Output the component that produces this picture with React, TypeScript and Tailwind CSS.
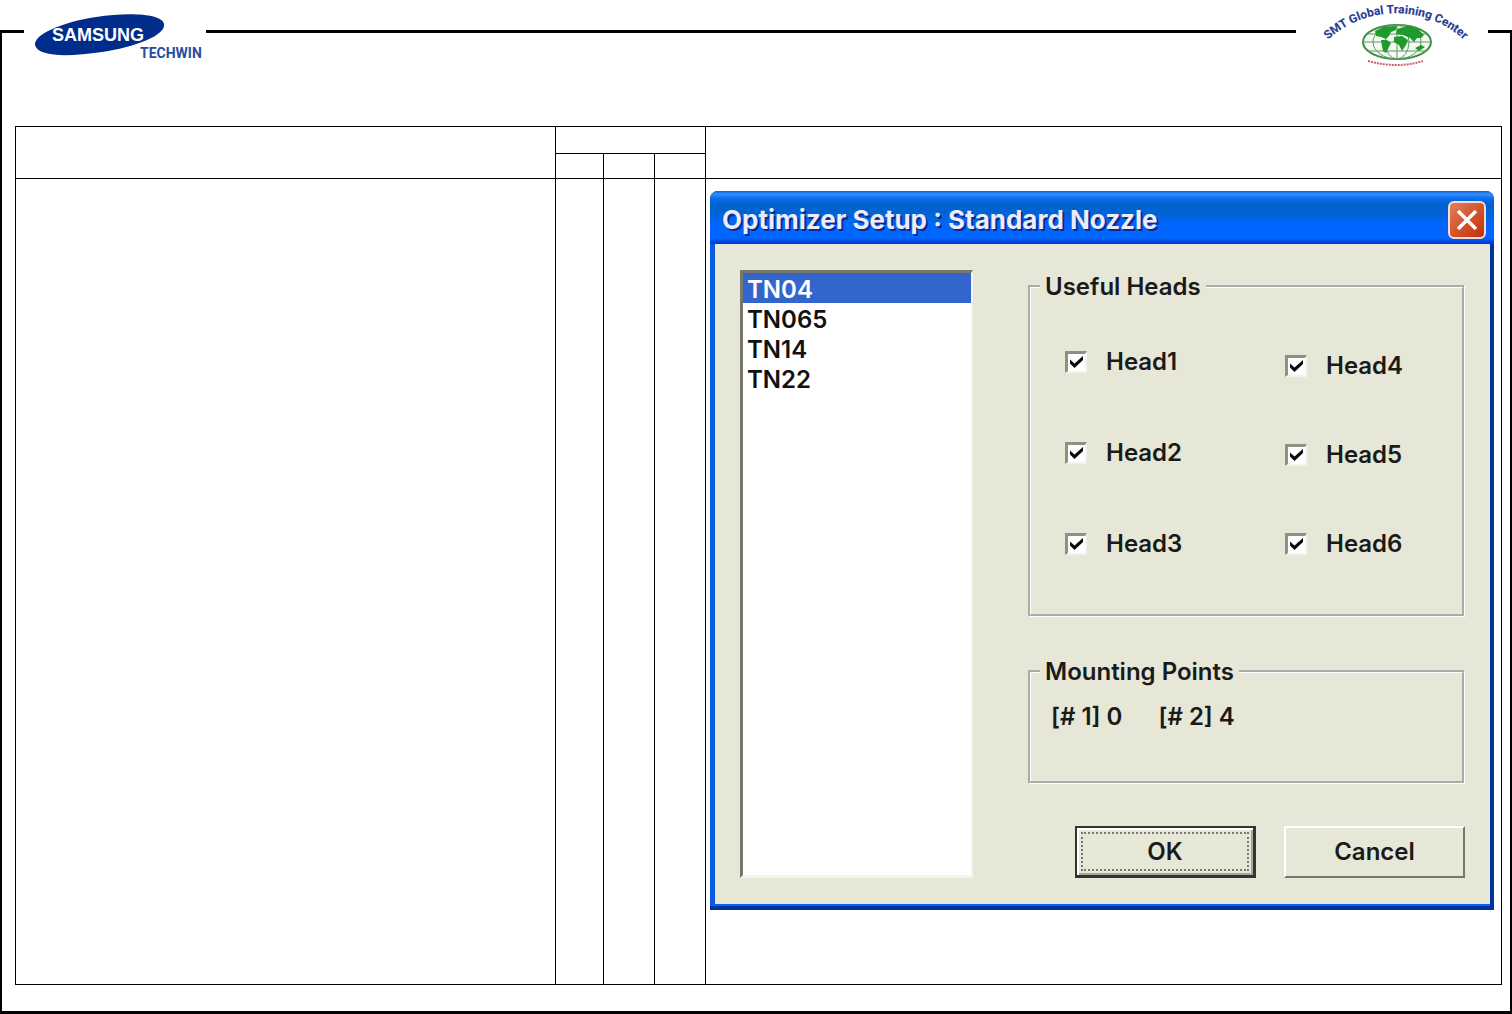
import { useState } from "react";

const nozzles = ["TN04", "TN065", "TN14", "TN22"];

function SamsungLogo() {
  return (
    <svg className="h-[66px] w-[182px]" viewBox="24 0 182 66" role="img" aria-label="Samsung Techwin">
      <path
        d="M35 45 C33 35 62 22 96 17 C130 12 162 14 164 24 C166 35 136 47 102 52 C68 57 38 57 35 45Z"
        fill="#002d8c"
      />
      <text x="52" y="41" fill="#fff" fontSize="18" fontWeight="700" fontFamily="Liberation Sans, sans-serif">
        SAMSUNG
      </text>
      <text x="140" y="58" fill="#2a4ca0" fontSize="14" fontWeight="700" fontFamily="Roboto, sans-serif">
        TECHWIN
      </text>
    </svg>
  );
}

function TrainingCenterLogo() {
  return (
    <svg className="h-[76px] w-[192px]" viewBox="1296 0 192 76" role="img" aria-label="SMT Global Training Center">
      <defs>
        <path id="arc" d="M1317 52 A100 100 0 0 1 1475 52" />
      </defs>
      <text fill="#2c3f97" fontSize="12" fontWeight="800" fontFamily="Roboto, sans-serif" textAnchor="middle">
        <textPath href="#arc" startOffset="50%">
          SMT Global Training Center
        </textPath>
      </text>
      <ellipse cx="1397" cy="42" rx="34" ry="17" fill="#f3faf1" stroke="#3f8f44" strokeWidth="2" />
      <g fill="none" stroke="#5f9a60" strokeWidth="1">
        <ellipse cx="1397" cy="42" rx="24" ry="17" />
        <ellipse cx="1397" cy="42" rx="12" ry="17" />
        <path d="M1397 25V59 M1363 42H1431 M1368 34H1426 M1368 51H1426" />
      </g>
      <g fill="#1f9a2c">
        <path d="M1375 31 L1384 27 L1397 26 L1396 30 L1391 32 L1389 36 L1386 39 L1381 37 L1376 36Z" />
        <path d="M1381 40 L1387 40 L1391 43 L1389 47 L1386 53 L1383 51 L1382 46Z" />
        <path d="M1397 29 L1408 26 L1418 29 L1424 35 L1421 38 L1417 38 L1414 42 L1410 38 L1403 35 L1396 34Z" />
        <path d="M1394 37 L1402 36 L1408 40 L1406 45 L1402 51 L1399 45 L1394 42Z" />
        <path d="M1415 48 L1421 45 L1425 47 L1419 51Z" />
      </g>
      <path d="M1368 61 Q1397 69 1423 61" fill="none" stroke="#c9606a" strokeWidth="2" strokeDasharray="2 1" />
    </svg>
  );
}

function HeadCheckbox({ label }: { label: string }) {
  const [checked, setChecked] = useState(true);

  return (
    <label className="flex h-[30px] items-center gap-[19px]">
      <span className="grid size-[22px] grid-cols-1 grid-rows-1">
        <input
          type="checkbox"
          checked={checked}
          onChange={() => setChecked(!checked)}
          className="peer col-start-1 row-start-1 size-[22px] appearance-none border-t-[3px] border-r-2 border-b-2 border-l-[3px] border-t-[#8f8f86] border-r-[#f4f4ee] border-b-[#f4f4ee] border-l-[#8f8f86] bg-white"
        />
        <svg
          viewBox="0 0 22 22"
          className="pointer-events-none invisible col-start-1 row-start-1 size-[22px] peer-checked:visible"
        >
          <path d="M5 8.5 L9.5 12.5 L18 5 V9 L9.5 17 L5 12.5Z" fill="#0a0a0a" />
        </svg>
      </span>
      {label}
    </label>
  );
}

function OptimizerDialog() {
  return (
    <section
      role="dialog"
      aria-label="Optimizer Setup : Standard Nozzle"
      className="flex h-[719px] w-full flex-col rounded-t-lg bg-[#0033a0] text-2xl/[30px] font-semibold text-[#1a1a1a]"
    >
      <header className="flex h-[53px] items-center justify-between rounded-t-lg bg-[linear-gradient(to_bottom,#1060e0_0,#3090ff_3px,#0a6ae8_8px,#0062cc_14px,#0064d8_24px,#0066ff_34px,#0066ff_47px,#0033cc_53px)] pr-2 pl-3">
        <h1 className="pt-1 text-[26px]/[30px] font-bold text-[#ececfa] [text-shadow:2px_2px_0_#0a2a90]">
          Optimizer Setup : Standard Nozzle
        </h1>
        <button
          type="button"
          aria-label="Close"
          className="mt-1 grid size-[38px] place-items-center rounded-md border-2 border-[#f4dcd8] bg-linear-to-br from-[#e08060] via-[#d4552c] to-[#c03000]"
        >
          <svg viewBox="0 0 20 20" className="size-5">
            <path d="M1 1 L19 19 M19 1 L1 19" stroke="#fff" strokeWidth="3.5" />
          </svg>
        </button>
      </header>

      <div className="mr-1 mb-1 flex flex-1 gap-[55px] border-b-2 border-l-[5px] border-b-[#0a62ea] border-l-[#0a5ae0] bg-[#e6e7d6] pt-[26px] pr-[25px] pb-[26px] pl-[25px]">
        <select
          size={20}
          defaultValue="TN04"
          aria-label="Nozzles"
          className="w-[233px] appearance-none overflow-hidden border-t-[3px] border-r-2 border-b-[3px] border-l-[3px] border-t-[#77776e] border-r-[#f4f4ee] border-b-[#f4f4ee] border-l-[#77776e] bg-white"
        >
          {nozzles.map((name) => (
            <option
              key={name}
              className="h-[30px] px-1 pt-0.5 pb-0 font-semibold text-[#111] checked:bg-[#3366cc] checked:bg-[linear-gradient(#3366cc,#3366cc)] checked:[-webkit-text-fill-color:#fff]"
            >
              {name}
            </option>
          ))}
        </select>

        <div className="flex flex-1 flex-col">
          <fieldset className="h-[347px] border-[3px] border-white [border-style:groove]">
            <legend className="ml-[9px] px-[5px] pt-0.5">Useful Heads</legend>
            <div className="flex items-end pt-[45px] pl-[34px]">
              <div className="flex h-[212px] w-[220px] flex-col justify-between">
                <HeadCheckbox label="Head1" />
                <HeadCheckbox label="Head2" />
                <HeadCheckbox label="Head3" />
              </div>
              <div className="flex h-[208px] flex-col justify-between">
                <HeadCheckbox label="Head4" />
                <HeadCheckbox label="Head5" />
                <HeadCheckbox label="Head6" />
              </div>
            </div>
          </fieldset>

          <fieldset className="mt-[38px] h-[129px] border-[3px] border-white [border-style:groove]">
            <legend className="ml-[9px] px-[5px] pt-0.5">Mounting Points</legend>
            <div className="flex gap-9 pt-[15px] pl-5">
              <span>[# 1] 0</span>
              <span>[# 2] 4</span>
            </div>
          </fieldset>

          <div className="mt-auto flex justify-end gap-7">
            <button
              type="button"
              className="h-[52px] w-[181px] border-2 border-r-[3px] border-b-[3px] border-[#333] p-1 shadow-[inset_2px_2px_0_#fff,inset_-2px_-2px_0_#a5a598]"
            >
              <span className="flex h-full items-center justify-center border-2 border-dotted border-[#777]">OK</span>
            </button>
            <button
              type="button"
              className="h-[52px] w-[181px] border-2 border-t-white border-r-[#77776e] border-b-[#77776e] border-l-white"
            >
              Cancel
            </button>
          </div>
        </div>
      </div>
    </section>
  );
}

export default function App() {
  return (
    <div className="flex min-h-screen flex-col bg-white font-[Inter,sans-serif]">
      {/* the logos sit in the gaps of the frame's top edge */}
      <header className="flex h-[76px]">
        <div className="mt-[30px] w-6 border-t-[3px] border-l-2 border-black" />
        <SamsungLogo />
        <div className="mt-[30px] flex-1 border-t-[3px] border-black" />
        <TrainingCenterLogo />
        <div className="mt-[30px] w-6 border-t-[3px] border-r-2 border-black" />
      </header>

      <main className="flex-1 border-x-2 border-b-[3px] border-black pt-[50px] pr-2 pb-[26px] pl-[13px]">
        <table className="w-full table-fixed border-collapse [&_td]:border [&_td]:border-black [&_th]:border [&_th]:border-black">
          <colgroup>
            <col className="w-[540px]" />
            <col className="w-12" />
            <col className="w-[51px]" />
            <col className="w-[51px]" />
            <col />
          </colgroup>
          <thead>
            <tr className="h-[27px]">
              <th rowSpan={2} />
              <th colSpan={3} />
              <th rowSpan={2} />
            </tr>
            <tr className="h-[25px]">
              <th />
              <th />
              <th />
            </tr>
          </thead>
          <tbody>
            <tr className="h-[806px]">
              <td />
              <td />
              <td />
              <td />
              <td className="pt-3 pr-[7px] pl-1 align-top">
                <OptimizerDialog />
              </td>
            </tr>
          </tbody>
        </table>
      </main>
    </div>
  );
}
